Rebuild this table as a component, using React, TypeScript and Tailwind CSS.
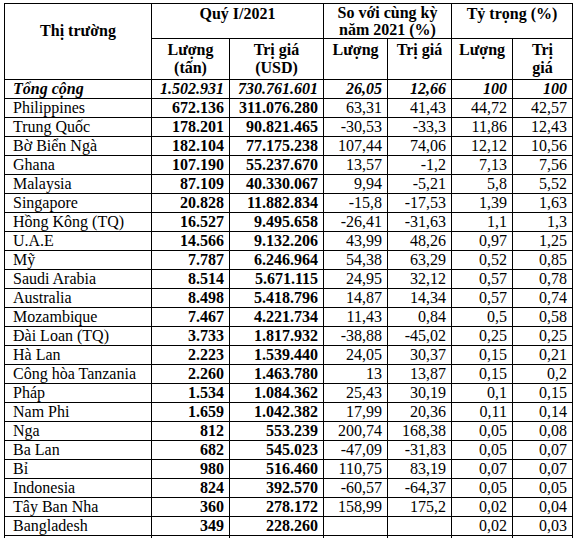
type Row = [string, string, string, string, string, string, string];

const rows: Row[] = [
  ["Philippines", "672.136", "311.076.280", "63,31", "41,43", "44,72", "42,57"],
  ["Trung Quốc", "178.201", "90.821.465", "-30,53", "-33,3", "11,86", "12,43"],
  ["Bờ Biển Ngà", "182.104", "77.175.238", "107,44", "74,06", "12,12", "10,56"],
  ["Ghana", "107.190", "55.237.670", "13,57", "-1,2", "7,13", "7,56"],
  ["Malaysia", "87.109", "40.330.067", "9,94", "-5,21", "5,8", "5,52"],
  ["Singapore", "20.828", "11.882.834", "-15,8", "-17,53", "1,39", "1,63"],
  ["Hồng Kông (TQ)", "16.527", "9.495.658", "-26,41", "-31,63", "1,1", "1,3"],
  ["U.A.E", "14.566", "9.132.206", "43,99", "48,26", "0,97", "1,25"],
  ["Mỹ", "7.787", "6.246.964", "54,38", "63,29", "0,52", "0,85"],
  ["Saudi Arabia", "8.514", "5.671.115", "24,95", "32,12", "0,57", "0,78"],
  ["Australia", "8.498", "5.418.796", "14,87", "14,34", "0,57", "0,74"],
  ["Mozambique", "7.467", "4.221.734", "11,43", "0,84", "0,5", "0,58"],
  ["Đài Loan (TQ)", "3.733", "1.817.932", "-38,88", "-45,02", "0,25", "0,25"],
  ["Hà Lan", "2.223", "1.539.440", "24,05", "30,37", "0,15", "0,21"],
  ["Công hòa Tanzania", "2.260", "1.463.780", "13", "13,87", "0,15", "0,2"],
  ["Pháp", "1.534", "1.084.362", "25,43", "30,19", "0,1", "0,15"],
  ["Nam Phi", "1.659", "1.042.382", "17,99", "20,36", "0,11", "0,14"],
  ["Nga", "812", "553.239", "200,74", "168,38", "0,05", "0,08"],
  ["Ba Lan", "682", "545.023", "-47,09", "-31,83", "0,05", "0,07"],
  ["Bỉ", "980", "516.460", "110,75", "83,19", "0,07", "0,07"],
  ["Indonesia", "824", "392.570", "-60,57", "-64,37", "0,05", "0,05"],
  ["Tây Ban Nha", "360", "278.172", "158,99", "175,2", "0,02", "0,04"],
  ["Bangladesh", "349", "228.260", "", "", "0,02", "0,03"],
];

const cell = "border border-black p-0";
const num = `${cell} pr-[5px] text-right`;

export default function App() {
  return (
    <div className="min-h-[538px] bg-white pl-[4px] pt-[3px] font-['Liberation_Serif','Times_New_Roman',serif] text-[16px] leading-[18px] text-black">
      <table className="w-[569px] table-fixed border-collapse">
        <colgroup>
          <col className="w-[147px]" />
          <col className="w-[78px]" />
          <col className="w-[94px]" />
          <col className="w-[64px]" />
          <col className="w-[64px]" />
          <col className="w-[61px]" />
          <col className="w-[60px]" />
        </colgroup>
        <thead>
          <tr className="h-[34px] font-bold leading-[17px]">
            <th rowSpan={2} className={`${cell} pt-[18px] align-top`}>Thị trường</th>
            <th colSpan={2} className={`${cell} pt-px align-top`}>Quý I/2021</th>
            <th colSpan={2} className={`${cell} align-top`}>
              So với cùng kỳ
              <br />
              năm 2021 (%)
            </th>
            <th colSpan={2} className={`${cell} pt-px align-top`}>Tỷ trọng (%)</th>
          </tr>
          <tr className="h-[41px] font-bold leading-[18px]">
            <th className={`${cell} pt-[2px] align-top`}>
              Lượng
              <br />
              (tấn)
            </th>
            <th className={`${cell} pt-[2px] align-top`}>
              Trị giá
              <br />
              (USD)
            </th>
            <th className={`${cell} pt-[2px] align-top`}>Lượng</th>
            <th className={`${cell} pt-[2px] align-top`}>Trị giá</th>
            <th className={`${cell} pt-[2px] align-top`}>Lượng</th>
            <th className={`${cell} pt-[2px] align-top`}>
              Trị
              <br />
              giá
            </th>
          </tr>
        </thead>
        <tbody>
          <tr className="h-[18px] font-bold italic">
            <td className={`${cell} pl-[8px]`}>Tổng cộng</td>
            <td className={num}>1.502.931</td>
            <td className={num}>730.761.601</td>
            <td className={num}>26,05</td>
            <td className={num}>12,66</td>
            <td className={num}>100</td>
            <td className={num}>100</td>
          </tr>
          {rows.map((r) => (
            <tr key={r[0]} className="h-[19px]">
              <td className={`${cell} pl-[8px]`}>{r[0]}</td>
              <td className={`${num} font-bold`}>{r[1]}</td>
              <td className={`${num} font-bold`}>{r[2]}</td>
              <td className={num}>{r[3]}</td>
              <td className={num}>{r[4]}</td>
              <td className={num}>{r[5]}</td>
              <td className={num}>{r[6]}</td>
            </tr>
          ))}
          <tr className="h-[19px]">
            <td className={cell}></td>
            <td className={cell}></td>
            <td className={cell}></td>
            <td className={cell}></td>
            <td className={cell}></td>
            <td className={cell}></td>
            <td className={cell}></td>
          </tr>
        </tbody>
      </table>
    </div>
  );
}
